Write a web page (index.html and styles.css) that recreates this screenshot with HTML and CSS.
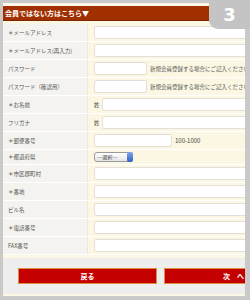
FILE: index.html
```html
<!DOCTYPE html>
<html lang="ja">
<head>
    <meta charset="UTF-8">
    <meta name="viewport" content="width=device-width, initial-scale=1.0">
    <title>会員登録</title>
    <link rel="stylesheet" href="styles.css">
</head>
<body>
    <div class="screen">
        <div class="top-strip"></div>
        <div class="section-head">会員ではない方はこちら▼</div>

        <div class="form">
            <div class="row">
                <div class="label">＊メールアドレス</div>
                <div class="field"><input type="text" class="input wide"></div>
            </div>
            <div class="row">
                <div class="label">＊メールアドレス(再入力)</div>
                <div class="field"><input type="text" class="input wide"></div>
            </div>
            <div class="row">
                <div class="label">パスワード</div>
                <div class="field">
                    <input type="password" class="input short">
                    <span class="note">新規会員登録する場合にご記入ください</span>
                </div>
            </div>
            <div class="row">
                <div class="label">パスワード（確認用）</div>
                <div class="field">
                    <input type="password" class="input short">
                    <span class="note">新規会員登録する場合にご記入ください</span>
                </div>
            </div>
            <div class="row">
                <div class="label">＊お名前</div>
                <div class="field"><span class="prefix">姓</span><input type="text" class="input wide"></div>
            </div>
            <div class="row">
                <div class="label">フリガナ</div>
                <div class="field"><span class="prefix">姓</span><input type="text" class="input wide"></div>
            </div>
            <div class="row">
                <div class="label">＊郵便番号</div>
                <div class="field">
                    <input type="text" class="input zip">
                    <span class="hint">100-1000</span>
                </div>
            </div>
            <div class="row row-small">
                <div class="label">＊都道府県</div>
                <div class="field">
                    <div class="select">---選択---<span class="spin"></span></div>
                </div>
            </div>
            <div class="row">
                <div class="label">＊市区郡町村</div>
                <div class="field"><input type="text" class="input wide"></div>
            </div>
            <div class="row">
                <div class="label">＊番地</div>
                <div class="field"><input type="text" class="input wide"></div>
            </div>
            <div class="row">
                <div class="label">ビル名</div>
                <div class="field"><input type="text" class="input wide"></div>
            </div>
            <div class="row">
                <div class="label">＊電話番号</div>
                <div class="field"><input type="text" class="input wide"></div>
            </div>
            <div class="row">
                <div class="label">FAX番号</div>
                <div class="field"><input type="text" class="input wide"></div>
            </div>
        </div>

        <div class="buttons">
            <button class="btn">戻る</button>
            <button class="btn">次　へ</button>
        </div>
    </div>

    <div class="step-badge">3</div>
</body>
</html>
```

FILE: styles.css
```css
body {
    margin: 0;
    padding: 3px 5px 4px 3px;
    background-color: #c9c9c9;
    font-family: "Noto Sans CJK JP", "Noto Sans", sans-serif;
    width: 250px;
    height: 300px;
    box-sizing: border-box;
    overflow: hidden;
}

.screen {
    width: 242px;
    height: 293px;
    overflow: hidden;
    background-color: #fbf7e3;
}

.top-strip {
    height: 3px;
    background-color: #fcf9ea;
}

/* Section header */
.section-head {
    height: 14px;
    line-height: 14px;
    background-color: #a03000;
    border-bottom: 1px solid #7e2400;
    color: white;
    font-size: 7px;
    font-weight: bold;
    padding-left: 2px;
    white-space: nowrap;
}

/* Form rows */
.form {
    margin-top: 3px;
}

.row {
    display: grid;
    grid-template-columns: 85px 1fr;
    height: 18px;
    border-bottom: 1px solid #ffffff;
    box-sizing: border-box;
}

.row-small {
    height: 15px;
}

.label {
    background-color: #f4f3ef;
    border-right: 1px solid #ece9dc;
    color: #555;
    font-size: 5.5px;
    padding-left: 5px;
    display: flex;
    align-items: center;
    white-space: nowrap;
}

.field {
    display: flex;
    align-items: center;
    padding-left: 6px;
    background-color: #fbf7e3;
    white-space: nowrap;
    min-width: 0;
}

.input {
    height: 13px;
    box-sizing: border-box;
    border: 1px solid #e2e0d8;
    border-radius: 2px;
    background: white;
    padding: 0;
    margin: 0;
    flex-shrink: 0;
}

.input.wide {
    width: 200px;
}

.input.short {
    width: 53px;
}

.input.zip {
    width: 78px;
}

.prefix {
    font-size: 5.5px;
    color: #444;
    width: 8px;
    flex-shrink: 0;
}

.note {
    font-size: 5.5px;
    color: #555;
    margin-left: 3px;
}

.hint {
    font-size: 6px;
    color: #444;
    margin-left: 3px;
}

.select {
    position: relative;
    width: 39px;
    height: 10px;
    box-sizing: border-box;
    border: 1px solid #999;
    border-radius: 3px;
    background: linear-gradient(#fff, #e4e4e4);
    font-size: 5px;
    line-height: 8px;
    color: #333;
    padding-left: 2px;
}

.select .spin {
    position: absolute;
    right: -1px;
    top: -1px;
    width: 6px;
    height: 10px;
    border-radius: 2px;
    background: linear-gradient(#7fa8e8, #2f62c4);
}

/* Buttons */
.buttons {
    display: flex;
    gap: 7px;
    margin-top: 3px;
    padding: 10px 0 10px 15px;
    background-color: #eeeeee;
}

.btn {
    flex-shrink: 0;
    width: 139px;
    height: 16px;
    padding: 0;
    background-color: #c40000;
    border: 1px solid #d89040;
    color: white;
    font-family: "Noto Sans CJK JP", sans-serif;
    font-size: 7px;
    font-weight: bold;
}

/* Step badge */
.step-badge {
    position: absolute;
    top: 0;
    right: 0;
    width: 41px;
    height: 29px;
    background-color: #c4c4c4;
    border-bottom-left-radius: 9px;
    color: white;
    font-family: "DejaVu Sans", sans-serif;
    font-weight: bold;
    font-size: 18px;
    line-height: 29px;
    text-align: center;
}
```
